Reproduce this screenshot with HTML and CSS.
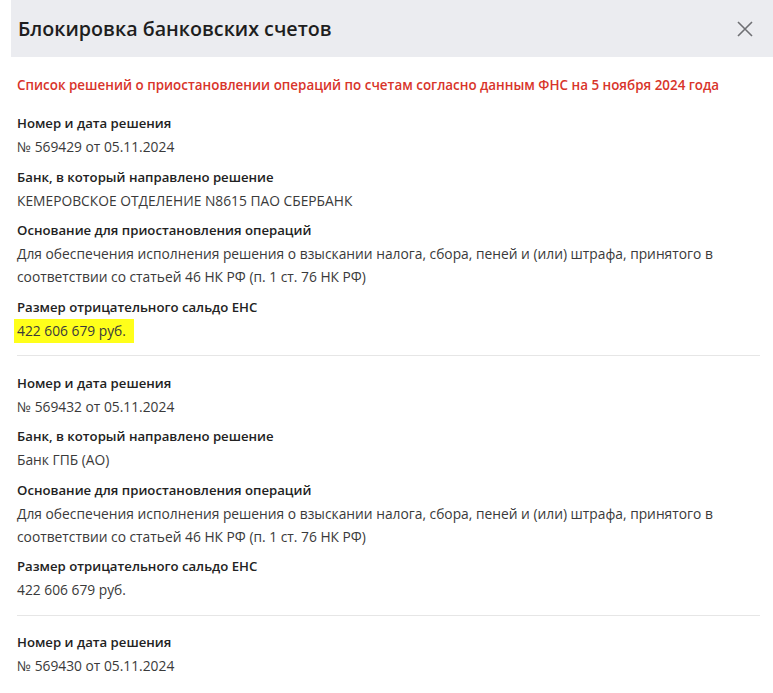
FILE: index.html
```html
<!DOCTYPE html>
<html lang="ru">
<head>
  <meta charset="UTF-8">
  <meta name="viewport" content="width=device-width, initial-scale=1.0">
  <title>Блокировка банковских счетов</title>
  <link rel="stylesheet" href="styles.css">
</head>
<body>
  <div class="modal-header">
    <h2>Блокировка банковских счетов</h2>
    <button class="close-btn" aria-label="Закрыть">
      <svg width="16" height="16" viewBox="0 0 16 16">
        <path d="M1 1 L15 15 M15 1 L1 15" stroke="#6f7074" stroke-width="1.6" fill="none"/>
      </svg>
    </button>
  </div>

  <div class="modal-body">
    <p class="notice">Список решений о приостановлении операций по счетам согласно данным ФНС на 5 ноября 2024 года</p>

    <div class="record">
      <div class="field">
        <div class="label">Номер и дата решения</div>
        <div class="value">№ 569429 от 05.11.2024</div>
      </div>
      <div class="field">
        <div class="label">Банк, в который направлено решение</div>
        <div class="value">КЕМЕРОВСКОЕ ОТДЕЛЕНИЕ N8615 ПАО СБЕРБАНК</div>
      </div>
      <div class="field">
        <div class="label">Основание для приостановления операций</div>
        <div class="value">Для обеспечения исполнения решения о взыскании налога, сбора, пеней и (или) штрафа, принятого в соответствии со статьей 46 НК РФ (п. 1 ст. 76 НК РФ)</div>
      </div>
      <div class="field">
        <div class="label">Размер отрицательного сальдо ЕНС</div>
        <div class="value"><span class="marker">422 606 679 руб.</span></div>
      </div>
    </div>

    <div class="record">
      <div class="field">
        <div class="label">Номер и дата решения</div>
        <div class="value">№ 569432 от 05.11.2024</div>
      </div>
      <div class="field">
        <div class="label">Банк, в который направлено решение</div>
        <div class="value">Банк ГПБ (АО)</div>
      </div>
      <div class="field">
        <div class="label">Основание для приостановления операций</div>
        <div class="value">Для обеспечения исполнения решения о взыскании налога, сбора, пеней и (или) штрафа, принятого в соответствии со статьей 46 НК РФ (п. 1 ст. 76 НК РФ)</div>
      </div>
      <div class="field">
        <div class="label">Размер отрицательного сальдо ЕНС</div>
        <div class="value">422 606 679 руб.</div>
      </div>
    </div>

    <div class="record">
      <div class="field">
        <div class="label">Номер и дата решения</div>
        <div class="value">№ 569430 от 05.11.2024</div>
      </div>
    </div>
  </div>
</body>
</html>
```

FILE: styles.css
```css
body {
  margin: 0;
  background: #fff;
  font-family: "Open Sans", "Noto Sans", sans-serif;
  color: #222;
}

.modal-header {
  display: flex;
  align-items: center;
  justify-content: space-between;
  height: 57px;
  margin-left: 11px;
  padding: 0 20px 0 7px;
  background: #ebecf0;
}

.modal-header h2 {
  margin: 0;
  font-size: 19.7px;
  font-weight: 600;
  color: #1e1e1e;
}

.close-btn {
  border: none;
  background: none;
  padding: 0;
  width: 16px;
  height: 16px;
  cursor: pointer;
}

.modal-body {
  padding: 17px 13px 0 17px;
}

.notice {
  margin: 0 0 15px;
  line-height: 23px;
  font-size: 13.4px;
  font-weight: 600;
  color: #d8342a;
}

.record {
  padding-bottom: 13.5px;
  margin-bottom: 15.5px;
  border-bottom: 1px solid #e6e6e6;
}

.record:last-child {
  border-bottom: none;
}

.field {
  margin-bottom: 7.5px;
}

.field:last-child {
  margin-bottom: 0;
}

.label {
  line-height: 23px;
  font-size: 13.2px;
  font-weight: 600;
  color: #222;
}

.value {
  line-height: 23px;
  font-size: 13.8px;
  color: #3a3a3a;
  padding-right: 20px;
}

.marker {
  background: #ffff1a;
  padding: 2px 8px 3px 3px;
  margin-left: -3px;
}
```
